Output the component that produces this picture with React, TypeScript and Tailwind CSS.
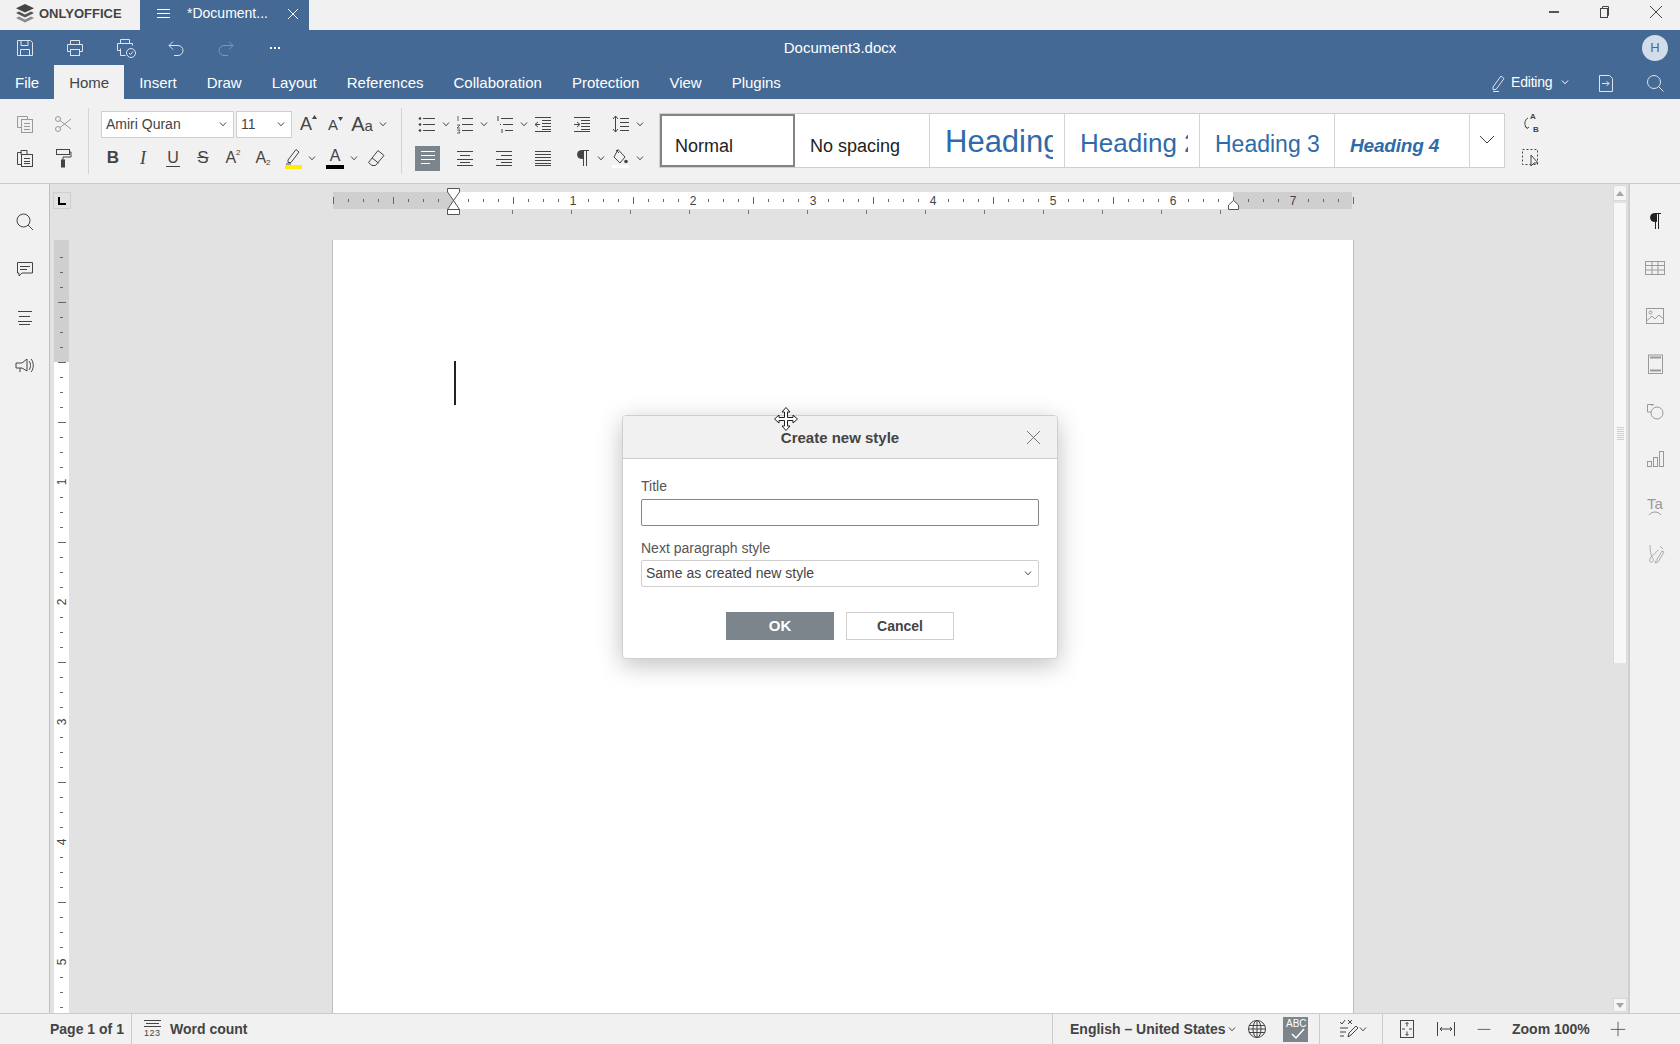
import React from "react";

const Svg = ({ s = 20, c = "#444", children }: { s?: number; c?: string; children: React.ReactNode }) => (
  <svg width={s} height={s} viewBox="0 0 20 20" fill="none" stroke={c} strokeWidth={1} className="shrink-0">
    {children}
  </svg>
);

const Chev = ({ c = "#444" }: { c?: string }) => (
  <svg width="8" height="5" viewBox="0 0 8 5" fill="none" stroke={c} strokeWidth={1} className="shrink-0">
    <path d="M1 .5 4 3.8 7 .5" />
  </svg>
);

const Cell = ({ w, children }: { w: string; children?: React.ReactNode }) => (
  <div className={`${w} h-full flex items-center justify-center shrink-0 text-[#444]`}>{children}</div>
);

const lines = (ys: number[], x1: number, x2: number) =>
  ys.map((y) => <path key={y} d={`M${x1} ${y + 0.5}H${x2}`} />);

const Logo = () => (
  <svg width="18" height="20" viewBox="0 0 18 20" className="shrink-0">
    <path d="M9 0 18 4.200 9 8.600 0 4.200Z" fill="#444" />
    <path d="M3 7.600 9 10.500 15 7.600 18 9 9 13.400 0 9Z" fill="#555" />
    <path d="M3 12.600 9 15.500 15 12.600 18 14 9 18.400 0 14Z" fill="#8b8b8b" />
  </svg>
);

const Tab = ({ label, active }: { label: string; active?: boolean }) => (
  <div
    className={`px-[15px] h-full flex items-center pt-[3px] text-[15px] ${
      active ? "bg-[#f1f1f1] text-[#444]" : "text-white"
    }`}
  >
    {label}
  </div>
);

const StyleCell = ({ children, active }: { children: React.ReactNode; active?: boolean }) => (
  <div
    className={`w-[135px] h-full shrink-0 overflow-hidden flex items-center bg-white pl-[15px] whitespace-nowrap ${
      active ? "border-2 border-[#848484]" : "border-r border-[#d5d5d5]"
    }`}
  >
    {children}
  </div>
);

const HRuler = () => {
  const ticks: React.ReactNode[] = [];
  for (let i = 0; i <= 68; i++) {
    const x = i * 15;
    if (i % 8 === 0 && i > 0 && i !== 8) continue;
    const long = i % 4 === 0;
    ticks.push(<path key={i} d={`M${x + 0.5} ${long ? 5 : 7}V${long ? 12 : 10}`} stroke="#666" />);
  }
  const stops: React.ReactNode[] = [];
  for (let i = 0; i < 13; i++) {
    stops.push(<path key={i} d={`M${179.5 + i * 59} 18V22`} stroke="#777" />);
  }
  return (
    <svg width="1019" height="26" viewBox="0 0 1019 26" className="overflow-visible shrink-0">
      <rect x="0" y="0" width="1019" height="17" fill="#cfcfcf" />
      <rect x="120" y="0" width="780" height="17" fill="#fff" />
      {ticks}
      {stops}
      {[1, 2, 3, 4, 5, 6, 7].map((n) => (
        <text key={n} x={120 + n * 120} y="13" textAnchor="middle" fontSize="12" fill="#444">
          {n}
        </text>
      ))}
      <path d="M114.500-3.500h12V0L120.500 8.500 114.500 0ZM120.500 8.500 126.500 17.500H114.500ZM114.500 17.500h12v5h-12Z" fill="#fff" stroke="#555" />
      <path d="M900.500 8.500 905.500 13V17.500H895.500V13Z" fill="#fff" stroke="#555" />
    </svg>
  );
};

const VRuler = () => {
  const ticks: React.ReactNode[] = [];
  for (let i = -8; i <= 43; i++) {
    const y = 122 + i * 15;
    if (i % 8 === 0 && i !== 0) continue;
    const long = i % 4 === 0;
    ticks.push(<path key={i} d={`M${long ? 4 : 6} ${y + 0.5}H${long ? 12 : 9}`} stroke="#666" />);
  }
  return (
    <svg width="15" height="773" viewBox="0 0 15 773" className="shrink-0">
      <rect x="0" y="0" width="15" height="122" fill="#cfcfcf" />
      <rect x="0" y="122" width="15" height="651" fill="#fff" />
      {ticks}
      {[1, 2, 3, 4, 5].map((n) => (
        <text
          key={n}
          x="8"
          y={122 + n * 120 + 4}
          textAnchor="middle"
          fontSize="12"
          fill="#444"
          transform={`rotate(-90 8 ${122 + n * 120})`}
        >
          {n}
        </text>
      ))}
    </svg>
  );
};

const SideSlot = ({ children }: { children: React.ReactNode }) => (
  <div className="h-[47.600px] w-full flex items-center justify-center">{children}</div>
);

export default function App() {
  return (
    <div className="w-[1680px] h-[1044px] flex flex-col overflow-hidden bg-[#f1f1f1] text-[#444] font-['Liberation_Sans',Arial,sans-serif] relative">
      {/* title bar */}
      <div className="h-[30px] flex items-center shrink-0">
        <div className="w-[140px] flex items-center pl-[16px] gap-[5px] pb-[3px]">
          <Logo />
          <span className="text-[13px] font-bold text-[#444]">ONLYOFFICE</span>
        </div>
        <div className="w-[169px] h-full bg-[#446995] flex items-center text-white pb-[3px]">
          <div className="ml-[17px] w-[13px] flex flex-col gap-[3px]">
            <div className="h-px bg-white" />
            <div className="h-px bg-white" />
            <div className="h-px bg-white" />
          </div>
          <span className="ml-[17px] text-[14px] w-[84px] whitespace-nowrap">*Document...</span>
          <svg width="12" height="12" viewBox="0 0 12 12" stroke="#fff" className="ml-[16px]">
            <path d="M1 1l10 10M11 1 1 11" />
          </svg>
        </div>
        <div className="flex-1" />
        <div className="h-full flex pb-[6px] -mr-[1px]">
          <Cell w="w-[51px]">
            <div className="w-[10px] h-[2px] bg-[#555]" />
          </Cell>
          <Cell w="w-[51px]">
            <svg width="14" height="14" viewBox="0 0 14 14" fill="none" stroke="#444">
              <path d="M4.500 3V1.500h6v9H9" />
              <rect x="2.500" y="3.500" width="7" height="9" />
            </svg>
          </Cell>
          <Cell w="w-[51px]">
            <svg width="14" height="14" viewBox="0 0 14 14" fill="none" stroke="#444">
              <path d="M1 1l12 12M13 1 1 13" />
            </svg>
          </Cell>
        </div>
      </div>

      {/* blue header */}
      <div className="h-[69px] bg-[#446995] shrink-0 flex flex-col text-white">
        <div className="h-[35px] flex items-center relative">
          <Cell w="w-[50px]">
            <Svg s={20} c="#dde4ec">
              <path d="M2.500 2.500h13l2 2v13h-15Z" />
              <path d="M6 2.500v5h7v-5M5.500 17.500v-6h9v6" />
            </Svg>
          </Cell>
          <Cell w="w-[50px]">
            <Svg s={20} c="#dde4ec">
              <path d="M5.500 6.500v-4h9v4M5.500 13.500h-3v-7h15v7h-3" />
              <rect x="5.500" y="11.500" width="9" height="6" />
            </Svg>
          </Cell>
          <Cell w="w-[51px]">
            <svg width="22" height="22" viewBox="0 0 22 22" fill="none" stroke="#dde4ec">
              <path d="M5.500 6.500v-4h9v4M5.500 13.500h-3v-7h15v2M5.500 11.500v7h5" />
              <circle cx="16" cy="16" r="4.500" fill="#446995" />
              <path d="M14 16l1.500 1.500 2.500-3" />
            </svg>
          </Cell>
          <Cell w="w-[50px]">
            <Svg s={20} c="#dde4ec">
              <path d="M3 7.500h9a5 5 0 0 1 0 10H8M3 7.500l4-4M3 7.500l4 4" />
            </Svg>
          </Cell>
          <Cell w="w-[49px]">
            <Svg s={20} c="#7c98b9">
              <path d="M17 7.500H8a5 5 0 0 0 0 10h4M17 7.500l-4-4M17 7.500l-4 4" />
            </Svg>
          </Cell>
          <div className="w-[50px] flex items-center justify-center gap-[2px]">
            <div className="w-[2px] h-[2px] bg-white" />
            <div className="w-[2px] h-[2px] bg-white" />
            <div className="w-[2px] h-[2px] bg-white" />
          </div>
          <div className="absolute left-[640px] w-[400px] text-center text-[15px] pt-[1px]">Document3.docx</div>
          <div className="ml-auto mr-[12px] w-[26px] h-[26px] rounded-full bg-[#d3dde9] text-[#446995] text-[13px] flex items-center justify-center">
            H
          </div>
        </div>
        <div className="h-[34px] flex items-stretch">
          <Tab label="File" />
          <Tab label="Home" active />
          <Tab label="Insert" />
          <Tab label="Draw" />
          <Tab label="Layout" />
          <Tab label="References" />
          <Tab label="Collaboration" />
          <Tab label="Protection" />
          <Tab label="View" />
          <Tab label="Plugins" />
          <div className="flex-1" />
          <div className="flex items-center pt-[1px]">
            <svg width="18" height="20" viewBox="0 0 18 20" fill="none" stroke="#dde4ec">
              <path d="M3 14 11 3l3 2.500-8 11H3ZM3 18.500h6" />
            </svg>
            <span className="ml-[3px] text-[14px] w-[42px] tracking-[-0.2px]">Editing</span>
            <span className="ml-[8px]">
              <Chev c="#fff" />
            </span>
            <div className="ml-[27px]">
              <svg width="20" height="20" viewBox="0 0 20 20" fill="none" stroke="#dde4ec">
                <path d="M3.500 2.500h10l3 3v13h-13Z" />
                <path d="M6 10.500h7M10.500 8l2.500 2.500-2.500 2.500" />
              </svg>
            </div>
            <div className="ml-[29px] mr-[15px]">
              <Svg s={20} c="#dde4ec">
                <circle cx="9" cy="9" r="6.500" />
                <path d="M13.500 13.500l5 5" />
              </Svg>
            </div>
          </div>
        </div>
      </div>

      {/* toolbar */}
      <div className="h-[85px] shrink-0 border-b border-[#cbcbcb] pt-[10px] flex">
        {/* clipboard */}
        <div className="w-[82px] pl-[6px] flex flex-col gap-[4px] shrink-0">
          <div className="h-[30px] flex">
            <Cell w="w-[38px]">
              <Svg s={20} c="#999">
                <path d="M2.500 2.500h10v3M2.500 2.500v11h4" />
                <rect x="6.500" y="5.500" width="11" height="13" />
                <path d="M9 9.500h6M9 12.500h6M9 15.500h6" />
              </Svg>
            </Cell>
            <Cell w="w-[38px]">
              <Svg s={20} c="#999">
                <circle cx="5" cy="5" r="2.500" />
                <circle cx="5" cy="15" r="2.500" />
                <path d="M7 6.500 18 15M7 13.500 18 5" />
              </Svg>
            </Cell>
          </div>
          <div className="h-[30px] flex">
            <Cell w="w-[38px]">
              <Svg s={20}>
                <path d="M6.500 4.500h-4v12h4M6 2.500h6v4H6Z" />
                <rect x="6.500" y="6.500" width="11" height="12" />
                <path d="M9 10.500h6M9 13.500h6M9 15.500h6" />
              </Svg>
            </Cell>
            <Cell w="w-[38px]">
              <Svg s={20}>
                <rect x="3.500" y="1.500" width="13" height="5" />
                <path d="M16.500 4h1.500v5H10v3" />
                <rect x="8.500" y="12" width="3" height="7" fill="#444" />
              </Svg>
            </Cell>
          </div>
        </div>
        <div className="w-px h-[66px] bg-[#d5d5d5] ml-[6px] shrink-0 mt-[-1px]" />
        {/* font */}
        <div className="w-[312px] pl-[9px] flex flex-col gap-[4px] shrink-0">
          <div className="h-[30px] flex items-center">
            <div className="ml-[3px] w-[133px] h-[27px] bg-white border border-[#cfcfcf] flex items-center pl-[4px] pr-[6px] text-[14px] justify-between">
              <span>Amiri Quran</span>
              <Chev />
            </div>
            <div className="ml-[2px] w-[56px] h-[27px] bg-white border border-[#cfcfcf] flex items-center pl-[4px] pr-[6px] text-[14px] justify-between">
              <span>11</span>
              <Chev />
            </div>
            <Cell w="w-[28px]">
              <span className="relative text-[18px] leading-none font-light">
                A
                <svg width="5" height="4" viewBox="0 0 5 4" className="absolute top-0 left-[12px]">
                  <path d="M2.500 0 5 4H0Z" fill="#444" />
                </svg>
              </span>
            </Cell>
            <Cell w="w-[26px]">
              <span className="relative text-[15px] leading-none">
                A
                <svg width="5" height="4" viewBox="0 0 5 4" className="absolute top-0 left-[10px]">
                  <path d="M0 0H5L2.500 4Z" fill="#444" />
                </svg>
              </span>
            </Cell>
            <Cell w="w-[32px]">
              <span className="text-[20px] leading-none">
                A<span className="text-[15px]">a</span>
              </span>
            </Cell>
            <Cell w="w-[10px]">
              <Chev />
            </Cell>
          </div>
          <div className="h-[30px] flex items-center">
            <Cell w="w-[30px]">
              <span className="font-bold text-[17px]">B</span>
            </Cell>
            <Cell w="w-[30px]">
              <span className="italic font-['Liberation_Serif',serif] text-[18px]">I</span>
            </Cell>
            <Cell w="w-[30px]">
              <span className="text-[16px] border-b border-[#444] leading-[17px] px-[1px]">U</span>
            </Cell>
            <Cell w="w-[30px]">
              <span className="text-[17px] line-through">S</span>
            </Cell>
            <Cell w="w-[30px]">
              <span className="text-[16px]">
                A<sup className="text-[8px] top-[-8px]">2</sup>
              </span>
            </Cell>
            <Cell w="w-[30px]">
              <span className="text-[16px]">
                A<sub className="text-[8px] bottom-[-2px]">2</sub>
              </span>
            </Cell>
            <Cell w="w-[30px]">
              <div className="flex flex-col items-center">
                <svg width="18" height="17" viewBox="0 0 18 17" fill="none" stroke="#444">
                  <path d="M4 12 12 1.500l3 2.500-8 10.500H4ZM2 16h5" />
                </svg>
                <div className="w-[17px] h-[4px] bg-[#ffee00]" />
              </div>
            </Cell>
            <Cell w="w-[8px]">
              <Chev />
            </Cell>
            <div className="w-[4px]" />
            <Cell w="w-[30px]">
              <div className="flex flex-col items-center">
                <span className="text-[16px] leading-[18px]">A</span>
                <div className="w-[18px] h-[4px] bg-black" />
              </div>
            </Cell>
            <Cell w="w-[8px]">
              <Chev />
            </Cell>
            <div className="w-[4px]" />
            <Cell w="w-[28px]">
              <Svg s={20}>
                <path d="M12 2.500l6 5-8.500 10H6l-3.500-3Z" />
                <path d="M6 10l6.500 5" />
              </Svg>
            </Cell>
          </div>
        </div>
        <div className="w-px h-[66px] bg-[#d5d5d5] shrink-0 mt-[-1px]" />
        {/* paragraph */}
        <div className="w-[258px] pl-[10px] flex flex-col gap-[4px] shrink-0">
          <div className="h-[30px] flex items-center">
            <Cell w="w-[30px]">
              <Svg s={20}>
                {lines([4, 10, 16], 6, 18)}
                <circle cx="3" cy="4.500" r="1.300" fill="#444" stroke="none" />
                <circle cx="3" cy="10.500" r="1.300" fill="#444" stroke="none" />
                <circle cx="3" cy="16.500" r="1.300" fill="#444" stroke="none" />
              </Svg>
            </Cell>
            <Cell w="w-[8px]">
              <Chev />
            </Cell>
            <Cell w="w-[30px]">
              <Svg s={20}>
                {lines([4, 10, 16], 7, 18)}
                <path d="M3 2v5M2 11h3l-3 3h3M2 16h3l-1 1.500 1 1.500H2" strokeWidth="0.800" />
              </Svg>
            </Cell>
            <Cell w="w-[8px]">
              <Chev />
            </Cell>
            <div className="w-[2px]" />
            <Cell w="w-[30px]">
              <Svg s={20}>
                {lines([4], 6, 18)}
                {lines([10], 8, 18)}
                {lines([16], 10, 18)}
                <path d="M3 2v5M5 10.500h1M7 15v4" />
              </Svg>
            </Cell>
            <Cell w="w-[8px]">
              <Chev />
            </Cell>
            <Cell w="w-[30px]">
              <Svg s={20}>
                {lines([3, 17], 2, 18)}
                {lines([6, 9, 12, 15], 9, 18)}
                <path d="M7 10.500H2M5 8l-3 2.500L5 13" />
              </Svg>
            </Cell>
            <div className="w-[9px]" />
            <Cell w="w-[30px]">
              <Svg s={20}>
                {lines([3, 17], 2, 18)}
                {lines([6, 9, 12, 15], 9, 18)}
                <path d="M2 10.500h5M5 8l3 2.500L5 13" />
              </Svg>
            </Cell>
            <div className="w-[9px]" />
            <Cell w="w-[30px]">
              <Svg s={20}>
                {lines([4, 8, 12, 16], 9, 18)}
                <path d="M4.500 2v16M2 5l2.500-3L7 5M2 15l2.500 3L7 15" />
              </Svg>
            </Cell>
            <Cell w="w-[8px]">
              <Chev />
            </Cell>
          </div>
          <div className="h-[30px] flex items-center">
            <div className="w-[3px]" />
            <div className="w-[25px] h-[25px] bg-[#7d858c] flex items-center justify-center shrink-0">
              <Svg s={20} c="#fff">
                {lines([3, 7, 11], 3, 17)}
                {lines([15], 3, 12)}
              </Svg>
            </div>
            <div className="w-[10px]" />
            <Cell w="w-[30px]">
              <Svg s={20}>
                {lines([3, 11, 17], 2, 18)}
                {lines([7, 14], 5, 15)}
              </Svg>
            </Cell>
            <div className="w-[9px]" />
            <Cell w="w-[30px]">
              <Svg s={20}>
                {lines([3, 11, 17], 2, 18)}
                {lines([7, 14], 7, 18)}
              </Svg>
            </Cell>
            <div className="w-[9px]" />
            <Cell w="w-[30px]">
              <Svg s={20}>{lines([3, 6, 9, 12, 15, 17], 2, 18)}</Svg>
            </Cell>
            <div className="w-[9px]" />
            <Cell w="w-[30px]">
              <Svg s={20}>
                <path d="M11.500 3v15M14.500 3v15M17 2.500H9.500a4 4 0 0 0 0 8h2V2.500Z" fill="#444" />
              </Svg>
            </Cell>
            <Cell w="w-[8px]">
              <Chev />
            </Cell>
            <Cell w="w-[30px]">
              <div className="flex flex-col items-center">
                <svg width="18" height="17" viewBox="0 0 18 17" fill="none" stroke="#444">
                  <path d="M7 1.500 14 9l-5 6-6-6ZM5 2l3 3" />
                  <circle cx="15" cy="13.500" r="1.800" fill="#444" stroke="none" />
                </svg>
                <div className="w-[17px] h-[3px] bg-white" />
              </div>
            </Cell>
            <Cell w="w-[10px]">
              <Chev />
            </Cell>
          </div>
        </div>
        {/* styles */}
        <div className="w-[846px] h-[55px] mt-[4px] border border-[#cfcfcf] flex shrink-0 -ml-[1px]">
          <StyleCell active>
            <span className="text-[18px] text-[#222] -ml-[2px] pt-[12px]">Normal</span>
          </StyleCell>
          <StyleCell>
            <span className="text-[18px] text-[#222] pt-[12px]">No spacing</span>
          </StyleCell>
          <StyleCell>
            <span className="text-[31px] text-[#2f6ba8] w-[108px] overflow-hidden pt-[3px]">Heading 1</span>
          </StyleCell>
          <StyleCell>
            <span className="text-[26px] text-[#2f6ba8] w-[108px] overflow-hidden pt-[5px]">Heading 2</span>
          </StyleCell>
          <StyleCell>
            <span className="text-[23px] text-[#2f6ba8] pt-[7px]">Heading 3</span>
          </StyleCell>
          <StyleCell>
            <span className="text-[19px] text-[#2f6ba8] italic font-bold pt-[11px] -tracking-[0.2px]">Heading 4</span>
          </StyleCell>
          <div className="flex-1 bg-white flex items-center justify-center pb-[3px]">
            <svg width="16" height="9" viewBox="0 0 16 9" fill="none" stroke="#444">
              <path d="M1 1l7 7 7-7" />
            </svg>
          </div>
        </div>
        {/* replace */}
        <div className="w-[52px] flex flex-col gap-[4px] shrink-0">
          <div className="h-[30px] flex items-center justify-center">
            <div className="relative w-[20px] h-[20px]">
              <Svg s={20}>
                <path d="M7 4C3 6 3 12 6 14M4 12l2 2.500L8 13" />
              </Svg>
              <span className="absolute left-[9px] top-[-2px] text-[8px] font-bold leading-[10px]">A</span>
              <span className="absolute left-[12px] top-[11px] text-[8px] font-bold leading-[10px]">B</span>
            </div>
          </div>
          <div className="h-[30px] flex items-center justify-center">
            <Svg s={20}>
              <rect x="1.500" y="1.500" width="15" height="15" strokeDasharray="2 2" />
              <path d="M10 7v11l3-3h4Z" fill="#f1f1f1" />
            </Svg>
          </div>
        </div>
      </div>

      {/* main */}
      <div className="flex-1 flex min-h-0">
        <div className="w-[50px] shrink-0 border-r border-[#c0c0c0] flex flex-col items-center pt-[14px] bg-[#f1f1f1]">
          <SideSlot>
            <Svg s={20}>
              <circle cx="8.500" cy="8.500" r="6.500" />
              <path d="M13 13l5 5" />
            </Svg>
          </SideSlot>
          <SideSlot>
            <Svg s={20}>
              <path d="M2.500 3.500h15v10.500H7L4 17v-3H2.500Z" />
              <path d="M5 7.500h10M5 10.500h7" />
            </Svg>
          </SideSlot>
          <SideSlot>
            <Svg s={20}>
              {lines([4, 14], 3, 17)}
              {lines([9], 4, 15)}
              {lines([17], 4, 15)}
            </Svg>
          </SideSlot>
          <SideSlot>
            <Svg s={20}>
              <path d="M1 8h6l5-4v12l-5-3H1ZM5 13v4" />
              <path d="M14 6c2 2 2 7 0 9M16 4c3 3 3 10 0 13" />
            </Svg>
          </SideSlot>
        </div>

        <div className="flex-1 flex flex-col min-w-0 bg-[#e2e2e2] relative">
          <div className="h-[56px] shrink-0 flex pt-[8px] pl-[3px]">
            <div className="w-[18px] h-[17px] border border-[#cfcfcf] flex items-center justify-center shrink-0">
              <svg width="8" height="8" viewBox="0 0 8 8">
                <path d="M0 0h2v6h6v2H0Z" fill="#000" />
              </svg>
            </div>
            <div className="ml-[262px]">
              <HRuler />
            </div>
          </div>
          <div className="flex-1 flex min-h-0 pl-[4px]">
            <VRuler />
            <div className="ml-[263px] w-[1022px] bg-white border-x border-[#bdbdbd] shrink-0 pt-[121px] pl-[121px]">
              <div className="w-[2px] h-[44px] bg-[#222]" />
            </div>
          </div>
        </div>

        {/* scrollbar */}
        <div className="w-[17px] shrink-0 bg-[#e2e2e2] border-r-2 border-[#cfcfcf] flex flex-col">
          <div className="w-[14px] h-[16px] mt-[1px] bg-[#f5f5f5] border border-[#dadada] flex items-center justify-center">
            <svg width="8" height="5" viewBox="0 0 8 5">
              <path d="M4 0 8 5H0Z" fill="#a5a5a5" />
            </svg>
          </div>
          <div className="w-[14px] h-[460px] mt-[2px] bg-[#f7f7f7] border-x border-[#dadada] flex flex-col items-center justify-center gap-[1px]">
            {[0, 1, 2, 3, 4, 5, 6].map((i) => (
              <div key={i} className="w-[7px] h-px bg-[#cfcfcf]" />
            ))}
          </div>
          <div className="flex-1" />
          <div className="w-[14px] h-[14px] mb-[1px] bg-[#f5f5f5] border border-[#dadada] flex items-center justify-center">
            <svg width="8" height="5" viewBox="0 0 8 5">
              <path d="M0 0H8L4 5Z" fill="#a5a5a5" />
            </svg>
          </div>
        </div>

        {/* right sidebar */}
        <div className="w-[50px] shrink-0 flex flex-col items-center pt-[13px] bg-[#f1f1f1]">
          <SideSlot>
            <Svg s={20} c="#222">
              <path d="M10.500 3v15M13.500 3v15M16 2.500H9.500a4 4 0 0 0 0 8h2V2.500Z" fill="#222" />
            </Svg>
          </SideSlot>
          <SideSlot>
            <Svg s={20} c="#999">
              <rect x=".5" y="3.500" width="19" height="13" />
              <path d="M.5 7.500h19M.5 12h19M7 3.500v13M13 3.500v13" />
            </Svg>
          </SideSlot>
          <SideSlot>
            <Svg s={20} c="#999">
              <rect x="1.500" y="2.500" width="17" height="15" />
              <circle cx="5.500" cy="6.500" r="1.500" />
              <path d="M1.500 15 7 10l3 3 4-4 4.500 4" />
            </Svg>
          </SideSlot>
          <SideSlot>
            <Svg s={20} c="#999">
              <rect x="3.500" y="1" width="14" height="18.500" />
              <path d="M5 3.500h11M5 16.500h11" strokeWidth="2" />
            </Svg>
          </SideSlot>
          <SideSlot>
            <Svg s={20} c="#999">
              <path d="M9 3.500H2.500V11H6" />
              <path d="M7 3v2" />
              <circle cx="12" cy="12" r="6" />
            </Svg>
          </SideSlot>
          <SideSlot>
            <Svg s={20} c="#999">
              <rect x="2.500" y="12.500" width="4" height="5" />
              <rect x="8.500" y="8.500" width="4" height="9" />
              <rect x="14.500" y="2.500" width="4" height="15" />
            </Svg>
          </SideSlot>
          <SideSlot>
            <div className="flex flex-col items-center">
              <span className="text-[15px] leading-[15px] text-[#999] font-light">Ta</span>
              <svg width="14" height="5" viewBox="0 0 14 5" fill="none" stroke="#999">
                <path d="M1 4c3-4 9-4 12 0" />
              </svg>
            </div>
          </SideSlot>
          <SideSlot>
            <Svg s={20} c="#aaa">
              <path d="M5 1c0 6 1 10 2 12s3 4 0 5-3-3-1-5 6-5 7-7" />
              <path d="M11 17l6-10 2 1-6 10-3 1ZM15 2l3 3" />
            </Svg>
          </SideSlot>
        </div>
      </div>

      {/* status bar */}
      <div className="h-[31px] shrink-0 border-t border-[#cbcbcb] flex items-center text-[14px] font-bold text-[#444] bg-[#f1f1f1]">
        <div className="w-[132px] h-full pl-[50px] flex items-center border-r border-[#cbcbcb] shrink-0 whitespace-nowrap">
          Page 1 of 1
        </div>
        <div className="pl-[12px] flex items-center">
          <div className="w-[17px] flex flex-col gap-[2px]">
            <div className="h-px bg-[#444]" />
            <div className="h-px bg-[#444] mx-[2px]" />
            <div className="h-px bg-[#444]" />
            <span className="text-[9px] font-normal leading-[9px] tracking-[0.5px]">123</span>
          </div>
          <span className="ml-[9px] whitespace-nowrap">Word count</span>
        </div>
        <div className="flex-1" />
        <div className="h-full border-l border-[#cbcbcb] pl-[17px] flex items-center shrink-0">
          <span className="w-[152px] whitespace-nowrap">English – United States</span>
          <div className="w-[6px]" />
          <Chev />
          <div className="w-[11px]" />
          <Svg s={20}>
            <circle cx="10" cy="10" r="8.500" />
            <ellipse cx="10" cy="10" rx="4" ry="8.500" />
            <path d="M10 1.500v17M2 6.500h16M2 13.500h16M1.500 10h17" />
          </Svg>
          <div className="w-[16px]" />
          <div className="w-[25px] h-[25px] bg-[#7d858c] flex items-center justify-center relative shrink-0">
            <span className="absolute top-[1px] left-[3px] text-[10px] font-normal text-white leading-[12px]">ABC</span>
            <svg width="16" height="12" viewBox="0 0 16 12" fill="none" stroke="#fff" strokeWidth="1.500" className="mt-[9px] ml-[5px]">
              <path d="M2 6l4 4 8-9" />
            </svg>
          </div>
          <div className="w-[11px]" />
          <div className="w-px h-full bg-[#cbcbcb]" />
          <div className="w-[19px]" />
          <Svg s={20}>
            <path d="M1 3l2 2 3-4M9 1l4 4M13 1 9 5M1 9h8M1 13h6M1 17h4" />
            <path d="M9 18l1-4 7-7 2 2-7 7Z" />
          </Svg>
          <Chev />
          <div className="w-[15px]" />
          <div className="w-px h-full bg-[#cbcbcb]" />
          <div className="w-[14px]" />
          <Svg s={20}>
            <rect x="3.500" y="1.500" width="13" height="17" />
            <path d="M10 3.500v4M8.500 5 10 3.500 11.500 5M10 16.500v-4M8.500 15l1.500 1.500 1.500-1.500M5 10h3M12 10h3" />
          </Svg>
          <div className="w-[19px]" />
          <Svg s={20}>
            <path d="M1.500 3v14M18.500 3v14M4 10h12M6 8l-2 2 2 2M14 8l2 2-2 2" />
          </Svg>
          <div className="w-[20px]" />
          <Svg s={16}>
            <path d="M2 10.500h16" />
          </Svg>
          <div className="w-[20px]" />
          <span className="w-[78px] whitespace-nowrap">Zoom 100%</span>
          <div className="w-[20px]" />
          <Svg s={16}>
            <path d="M1 10.500h18M10 1v18" />
          </Svg>
          <div className="w-[54px]" />
        </div>
      </div>

      {/* dialog */}
      <div className="absolute left-[622px] top-[415px] w-[436px] h-[244px] bg-white border border-[#cfcfcf] rounded-[4px] shadow-[0_6px_24px_rgba(0,0,0,0.25)] flex flex-col overflow-hidden">
        <div className="h-[43px] shrink-0 bg-[#f1f1f1] border-b border-[#cfcfcf] flex items-center justify-center relative pt-[2px]">
          <span className="text-[15px] font-bold text-[#444]">Create new style</span>
          <svg width="15" height="15" viewBox="0 0 15 15" fill="none" stroke="#777" className="absolute right-[16px] top-[14px]">
            <path d="M1 1l13 13M14 1 1 14" />
          </svg>
        </div>
        <div className="flex flex-col px-[18px]">
          <div className="mt-[19px] text-[14px] leading-[16px] text-[#555]">Title</div>
          <div className="mt-[5px] h-[27px] border border-[#848484] rounded-[2px]" />
          <div className="mt-[14px] text-[14px] leading-[16px] text-[#555]">Next paragraph style</div>
          <div className="mt-[4px] h-[27px] border border-[#cfcfcf] rounded-[2px] flex items-center justify-between pl-[4px] pr-[6px] text-[14px] text-[#444]">
            <span>Same as created new style</span>
            <Chev />
          </div>
          <div className="mt-[25px] flex justify-center gap-[12px]">
            <div className="w-[108px] h-[28px] bg-[#7d858c] text-white font-bold text-[15px] flex items-center justify-center">OK</div>
            <div className="w-[108px] h-[28px] border border-[#cfcfcf] text-[#444] font-bold text-[14px] flex items-center justify-center">Cancel</div>
          </div>
        </div>
      </div>

      {/* move cursor */}
      <svg width="24" height="24" viewBox="0 0 24 24" className="absolute left-[774px] top-[407px]" fill="#fff" stroke="#222">
        <path d="M12 .5 16 5h-2.500v5.500H19V8l4.500 4-4.500 4v-2.500h-5.500V19H16l-4 4.500L8 19h2.500v-5.500H5V16L.5 12 5 8v2.500h5.500V5H8Z" />
      </svg>
    </div>
  );
}
